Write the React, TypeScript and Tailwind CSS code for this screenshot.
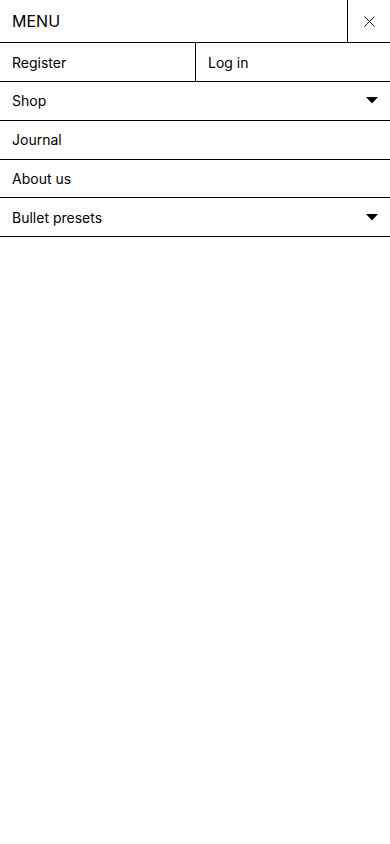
import { useState } from "react";

const items = [
  { label: "Shop", dropdown: true },
  { label: "Journal", dropdown: false },
  { label: "About us", dropdown: false },
  { label: "Bullet presets", dropdown: true },
];

const Caret = () => (
  <svg width="12" height="7" viewBox="0 0 12 7" className="block">
    <path d="M0 0h12L6 6.5z" fill="#000" />
  </svg>
);

export default function App() {
  const [open, setOpen] = useState<string | null>(null);

  return (
    <div
      className="min-h-screen bg-white text-black"
      style={{ fontFamily: "Inter, 'Liberation Sans', sans-serif" }}
    >
      <header className="flex h-[43px] border-b border-black">
        <div className="flex flex-1 items-center pl-3 text-[16px]">MENU</div>
        <button className="flex w-[43px] items-center justify-center border-l border-black">
          <svg width="11" height="11" viewBox="0 0 11 11">
            <path d="M0.5 0.5l10 10M10.5 0.5l-10 10" stroke="#000" strokeWidth="0.9" />
          </svg>
        </button>
      </header>

      <div className="flex h-[39px] border-b border-black text-[14px]">
        <a className="flex w-[196px] items-center border-r border-black pl-3">Register</a>
        <a className="flex flex-1 items-center pl-3">Log in</a>
      </div>

      <nav>
        {items.map((item) => (
          <button
            key={item.label}
            onClick={() => setOpen(open === item.label ? null : item.label)}
            className="flex h-[38.8px] w-full items-center justify-between border-b border-black pl-3 pr-3 text-left text-[14px]"
          >
            <span>{item.label}</span>
            {item.dropdown && <Caret />}
          </button>
        ))}
      </nav>
    </div>
  );
}
